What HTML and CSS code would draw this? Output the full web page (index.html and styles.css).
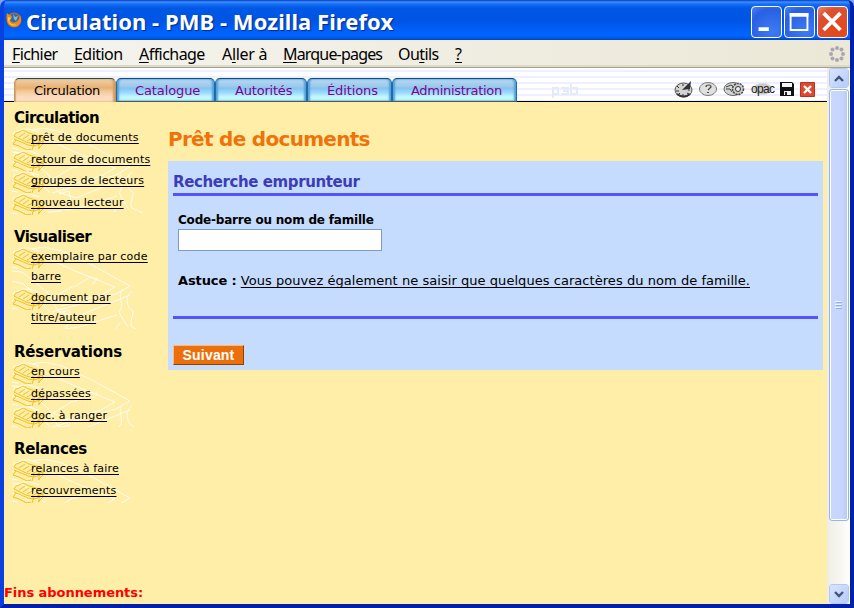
FILE: index.html
```html
<!DOCTYPE html>
<html lang="fr">
<head>
<meta charset="utf-8">
<title>Circulation - PMB - Mozilla Firefox</title>
<link rel="stylesheet" href="styles.css">
</head>
<body>
<svg width="0" height="0" class="defs">
  <defs>
    <g id="book" fill="none">
      <path stroke="#f0c020" d="M5 5l6-3 6 3 7 2 7 3M2 8l4 2 8 4 8 2 9-3M2 8l3-4M2 11l14 6 6 1 9-3M1 16l3-4M1 16l6 2 8 4 4-1M7 9l6-4M11 11l6-4M15 13l7-4M20 15l7-4M22 16l-2 6M31 10v6l-5 5M27 13v8"/>
      <path stroke="#fffdf0" d="M4 4l7-3h6l10 3M1 6l2-3M0 13l2-2M0 20l6 1"/>
    </g>
    <g id="sketch" fill="none" stroke="#fffdf0">
      <path d="M20 2L32 0l18 4 30 14 38 21-14 8-64 18M33 10l30 14 40 16-14 8-40 11M41 51l20-12M41 51l10 4M0 24l10 1 14 11 12 10 10 18 18 6 54-22M62 40l16-10 8 2-6 5M0 34l12 3 26 28M47 66l10-3 2 10-6 9 14-2 38-12M111 42c-6 6 0 12-2 20-3 2-1 5 2 10l5 8M120 44c-8 5-5 18 1 20 0 8-4 10-1 16l11 5M36 84l14-1M102 84l6-8"/>
    </g>
  </defs>
</svg>
<div class="window">
  <header class="titlebar">
    <svg class="fox" width="16" height="16" viewBox="0 0 16 16"><circle cx="8" cy="8" r="7.5" fill="#d9620d"/><circle cx="8" cy="6.5" r="5" fill="#306dac"/><path d="M7 2l2 3 3-1-2 5-2-2z" fill="#8db7cb"/><path d="M1 1c2 2 4 2 5 4L4 8c2 4 7 3 9-1l1-4c3 7-1 12-6 12S-1 9 1 1z" fill="#ed8918"/><path d="M2 5l3 1-2 3c2 4 5 4 8 3-4 4-10 0-9-7z" fill="#ffc849"/></svg>
    <h1>Circulation - PMB - Mozilla Firefox</h1>
    <div class="controls">
      <svg class="ctl" viewBox="0 0 31 31"><path d="M7 21h11v4H7z" fill="#fff"/></svg>
      <svg class="ctl" viewBox="0 0 31 31"><path d="M6 7h18v17H6z" fill="none" stroke="#fff" stroke-width="2"/><path d="M5 6h20v4H5z" fill="#fff"/></svg>
      <svg class="ctl close" viewBox="0 0 31 31"><path d="M6 6l18 18M24 6L6 24" stroke="#fff" stroke-width="4"/></svg>
    </div>
  </header>
  <nav class="menubar">
    <span class="m1"><u>F</u>ichier</span><span class="m2"><u>E</u>dition</span><span class="m3"><u>A</u>ffichage</span><span class="m4">A<u>l</u>ler à</span><span class="m5"><u>M</u>arque-pages</span><span class="m6">Ou<u>t</u>ils</span><span class="m7"><u>?</u></span>
    <svg class="throbber" width="18" height="18" viewBox="0 0 18 18" fill="#aaa7b0"><circle cx="9" cy="3" r="2"/><circle cx="13.5" cy="4.5" r="2"/><circle cx="15" cy="9" r="2"/><circle cx="13.5" cy="13.5" r="2"/><circle cx="9" cy="15" r="2"/><circle cx="4.5" cy="13.5" r="2"/><circle cx="3" cy="9" r="2"/><circle cx="4.5" cy="4.5" r="2"/></svg>
  </nav>
  <div class="view">
    <div class="page">
      <div class="tabs">
        <a class="tab t1 active">Circulation</a><a class="tab t2">Catalogue</a><a class="tab t3">Autorités</a><a class="tab t4">Éditions</a><a class="tab t5">Administration</a>
        <svg class="mark" width="28" height="16" viewBox="0 0 28 16"><path d="M2 15V5h5v6H2M10 5h7v6h-7M12 8h5M20 1v10h6V5h-6" fill="none" stroke="#e3ebfa" stroke-width="2"/></svg>
        <div class="tools">
          <svg class="i1" width="20" height="18" viewBox="0 0 20 18"><ellipse cx="9.5" cy="10" rx="8.5" ry="7" fill="#d4d4d4" stroke="#555"/><path d="M3 6l2 2M9 4v2M2 11h3M4 15l2-2M9 16v-2M15 14l-2-1M16 10h-2" stroke="#333"/><path d="M8 10l9-9-1 8z" fill="#333"/><path d="M3 14q7 5 13 0" fill="none" stroke="#333" stroke-width="2"/></svg>
          <svg class="i2" width="20" height="18" viewBox="0 0 20 18"><ellipse cx="10" cy="9" rx="8.5" ry="6.5" fill="#e0e0de" stroke="#777"/><path d="M8 7q0-2 3-2 2 0 2 2l-3 3" fill="none" stroke="#444" stroke-width="1.2"/><path d="M9 12.500h2" stroke="#444"/></svg>
          <svg class="i3" width="22" height="18" viewBox="0 0 22 18"><ellipse cx="10" cy="9" rx="9" ry="6.500" fill="#d4d4d2" stroke="#666"/><path d="M3 7l5-2 3 2M3 9h4l2 3" fill="none" stroke="#444"/><circle cx="15" cy="9" r="5.500" fill="#ccc" stroke="#444" stroke-width="1.5" stroke-dasharray="2 1"/><circle cx="15" cy="9" r="2.500" fill="#eee" stroke="#333"/></svg>
          <span class="opac">opac</span>
          <svg class="i5" width="14" height="16" viewBox="0 0 14 16"><path d="M0 1h12l2 2v12H0z" fill="#111"/><path d="M2 2h10v4H2zM4 10h7v4H4z" fill="#f5f5f5"/><path d="M5 11h2v3H5z" fill="#222"/></svg>
          <svg width="15" height="15" viewBox="0 0 15 15"><path d="M.5.5h14v14H.5z" fill="#dd482f" stroke="#b93222"/><path d="M4 4l7 7M11 4l-7 7" stroke="#fff" stroke-width="2.4"/></svg>
        </div>
      </div>
      <div class="body">
        <aside>
          <h3 class="tight">Circulation</h3>
          <ul><li><svg class="sk" height="86"><use href="#sketch"/></svg><svg class="bk"><use href="#book"/></svg><a>prêt de documents</a></li><li><svg class="bk"><use href="#book"/></svg><a>retour de documents</a></li><li><svg class="bk"><use href="#book"/></svg><a>groupes de lecteurs</a></li><li><svg class="bk"><use href="#book"/></svg><a>nouveau lecteur</a></li></ul>
          <h3 class="tight">Visualiser</h3>
          <ul><li class="two"><svg class="sk" height="82"><use href="#sketch"/></svg><svg class="bk"><use href="#book"/></svg><a>exemplaire par code<br>barre</a></li><li class="two"><svg class="bk"><use href="#book"/></svg><a>document par<br>titre/auteur</a></li></ul>
          <h3 class="wide">Réservations</h3>
          <ul class="short"><li><svg class="sk" height="65"><use href="#sketch"/></svg><svg class="bk"><use href="#book"/></svg><a>en cours</a></li><li><svg class="bk"><use href="#book"/></svg><a>dépassées</a></li><li><svg class="bk"><use href="#book"/></svg><a>doc. à ranger</a></li></ul>
          <h3>Relances</h3>
          <ul><li><svg class="sk" height="44"><use href="#sketch"/></svg><svg class="bk"><use href="#book"/></svg><a>relances à faire</a></li><li><svg class="bk"><use href="#book"/></svg><a>recouvrements</a></li></ul>
          <p class="fins">Fins abonnements:</p>
        </aside>
        <main>
          <h2>Prêt de documents</h2>
          <form>
            <h4>Recherche emprunteur</h4>
            <div class="fields">
              <label>Code-barre ou nom de famille</label>
              <input type="text">
              <p><b>Astuce :</b> <u>Vous pouvez également ne saisir que quelques caractères du nom de famille.</u></p>
            </div>
            <button type="button">Suivant</button>
          </form>
        </main>
      </div>
    </div>
    <div class="scroll">
      <div class="arrow"><svg width="10" height="7" viewBox="0 0 10 7"><path d="M1 6l4-4 4 4" fill="none" stroke="#405679" stroke-width="2.4"/></svg></div>
      <div class="thumb"><svg width="8" height="9" viewBox="0 0 8 9"><path d="M0 .5h6M0 3.5h6M0 6.5h6" stroke="#f2f6ff"/><path d="M1 1.5h6M1 4.5h6M1 7.5h6" stroke="#8baef5"/></svg></div>
      <div class="arrow down"><svg width="10" height="7" viewBox="0 0 10 7"><path d="M1 1l4 4 4-4" fill="none" stroke="#405679" stroke-width="2.4"/></svg></div>
    </div>
  </div>
</div>
</body>
</html>
```
FILE: styles.css
```css
* { box-sizing: border-box; }
body { margin: 0; width: 854px; height: 608px; overflow: hidden; background: #7ba6ef; font-family: "DejaVu Sans", Verdana, sans-serif; color: #000; }
.defs { position: absolute; }
h1, h2, h3, h4, p, ul { margin: 0; padding: 0; }
.window { width: 854px; height: 608px; border: solid; border-width: 0 4px 4px; border-color: #0a3fe0 #0020a8 #0020a8 #0a3fe0; border-radius: 7px 7px 0 0; overflow: hidden; display: flex; flex-direction: column; background: #0054e3; }
.titlebar { height: 40px; margin: 0 -4px; padding: 0 6px; display: flex; align-items: center; background: linear-gradient(#0838c0 0, #3b91ff 2px, #1770f5 4px, #0058e6 8px, #0054e3 20px, #005df5 28px, #0066ff 36px, #0050d8 39px, #003fc0); flex: none; }
.fox { margin: 0 4px 0 0; }
h1 { flex: 1; font: bold 22px "Noto Sans", sans-serif; color: #fff; text-shadow: 1px 1px 1px #082a86; white-space: nowrap; padding-top: 1px; letter-spacing: .06px; }
.controls { display: flex; gap: 2px; margin-top: 3px; }
.ctl { width: 31px; height: 32px; border: 1px solid #fff; border-radius: 4px; background: radial-gradient(circle at 70% 80%, #3f7af5, #2760e3 70%, #4f83ee); }
.ctl.close { background: radial-gradient(circle at 70% 80%, #e2481c, #dc5030 70%, #e98a70); }
.menubar { height: 28px; flex: none; display: flex; align-items: center; padding: 0 4px 0 8px; border-bottom: 1px solid #a5a294; background: linear-gradient(90deg, #f5f4ee, #ebe8d7); font: 16px "Noto Sans", sans-serif; white-space: nowrap; box-shadow: inset 0 -2px #dedac8; }
.menubar u { text-underline-offset: 2px; text-decoration-thickness: 1px; text-decoration-skip-ink: none; }
.m1 { width: 62px; letter-spacing: -.6px; } .m2 { width: 65px; letter-spacing: -.55px; } .m3 { width: 83px; letter-spacing: -.55px; } .m4 { width: 61px; letter-spacing: -.3px; } .m5 { width: 115px; letter-spacing: -.82px; } .m6 { width: 57px; letter-spacing: -.6px; }
.throbber { margin-left: auto; }
.view { flex: 1; display: flex; min-height: 0; }
.page { width: 823px; display: flex; flex-direction: column; }
.tabs { height: 34px; flex: none; padding: 10px 0 0 10px; display: flex; border-bottom: 1px solid #000; background: repeating-linear-gradient(#fff 0 2px, #eef0ff 2px 4px, #fff 4px 6px); }
.tab { height: 24px; padding-left: 19px; border: 1px solid #1c6cae; border-top: 1px solid #0a4b87; border-bottom-color: #555; border-radius: 5px 5px 0 0; background: linear-gradient(#b8d9f2 0, #9bc8ea 8px, #7fc2f2 9px, #a0dcfc 14px, #c0faff 18px); box-shadow: inset 2px 0 2px #569fd6, inset -2px 0 2px #569fd6; color: #800090; font-size: 13px; line-height: 24px; white-space: nowrap; }
.tab.active { color: #000; border-color: #c09a60; border-top-color: #284e49; background: linear-gradient(#efd0a6, #e8b073 9px, #f2c796 12px, #fcdcbf 18px); box-shadow: inset 1px 0 1px #e5a565, inset -2px 0 2px #d49a60; border-bottom: 0; }
.t1 { width: 102px; letter-spacing: -.33px; } .t2 { width: 99px; padding-left: 18px; letter-spacing: -.1px; } .t3 { width: 92px; letter-spacing: -.2px; } .t4 { width: 85px; letter-spacing: -.12px; } .t5 { width: 125px; padding-left: 18px; letter-spacing: -.3px; }
.mark { margin: 5px 0 0 34px; }
.tools { margin: 2px 12px 0 auto; display: flex; align-items: center; height: 18px; }
.i1 { margin-right: 4px; } .i2 { margin-right: 5px; } .i3 { margin-right: 6px; } .i5 { margin-right: 6px; }
.opac { width: 23px; height: 14px; border-radius: 50%; background: radial-gradient(ellipse, #ccc 0 50%, transparent 65%); color: #222; font: 12px/14px "Liberation Sans", sans-serif; letter-spacing: -.7px; margin-right: 6px; }
.body { flex: 1; display: flex; background: #ffeea8; }
aside { width: 164px; display: flex; flex-direction: column; padding-top: 7px; }
h3 { height: 19px; line-height: 19px; font-size: 15px; padding-left: 10px; white-space: nowrap; letter-spacing: -.35px; }
.tight { letter-spacing: -.6px; }
.wide { letter-spacing: -.2px; }
ul { list-style: none; margin: 0 0 14px 8px; font-size: 11px; line-height: 20px; letter-spacing: .2px; }
ul.short { margin-bottom: 13px; }
li { position: relative; height: 21.6px; padding-left: 19px; white-space: nowrap; }
li.two { height: 41px; }
li a { position: relative; text-decoration: underline; text-underline-offset: 2px; text-decoration-skip-ink: none; text-decoration-thickness: 1px; }
.sk { position: absolute; left: 0; top: 0; width: 136px; }
.bk { position: absolute; left: 0; top: 0; width: 32px; height: 22px; }
.fins { margin: auto 0 2px; font-size: 13px; font-weight: bold; line-height: 18px; color: #f00; white-space: nowrap; letter-spacing: -.05px; }
main { width: 655px; }
h2 { height: 59px; padding-top: 24px; line-height: 26px; font-size: 20px; color: #ee730b; letter-spacing: -.7px; white-space: nowrap; }
form { height: 209px; background: #c5dcff; padding: 8px 5px 0; }
h4 { height: 27px; line-height: 26px; border-bottom: 3px solid #5454ff; color: #3c3cb8; font-size: 15px; letter-spacing: -.4px; }
.fields { height: 123px; border-bottom: 3px solid #5454ff; padding: 14px 5px 0; }
label { display: block; font-size: 12px; font-weight: bold; line-height: 20px; height: 19px; letter-spacing: -.2px; }
input { display: block; width: 204px; height: 22px; border: 1px solid #7b9ebd; background: #fff; padding: 0; }
.fields p { margin-top: 20px; font-size: 13px; line-height: 20px; white-space: nowrap; letter-spacing: -.1px; }
.fields u { letter-spacing: .05px; text-underline-offset: 2px; text-decoration-skip-ink: none; text-decoration-thickness: 1px; }
button { display: block; margin-top: 26px; width: 71px; height: 20px; padding: 0; background: #eb700c; color: #fff; border: 1px solid; border-color: #ffb77a #8b4300 #8b4300 #ffb77a; font: bold 14px/18px "Liberation Sans", sans-serif; letter-spacing: .2px; }
.scroll { width: 23px; margin-left: auto; display: flex; flex-direction: column; padding: 0 1px 0 2px; background: linear-gradient(90deg, #eeede5, #fefefb); }
.arrow { height: 20px; border: 1px solid #fff; outline: 1px solid #b5c8ee; outline-offset: -1px; border-radius: 3px; background: linear-gradient(135deg, #d8e4ff, #b7cbf8); display: flex; align-items: center; justify-content: center; flex: none; }
.thumb { height: 432px; margin-top: 1px; border: 1px solid #98b5e8; border-radius: 3px; box-shadow: inset 0 0 0 1px #fff; background: linear-gradient(90deg, #c9d7fc, #c6d5fd 70%, #b4c8f6); display: flex; align-items: center; justify-content: center; }
.down { margin-top: auto; }
```
